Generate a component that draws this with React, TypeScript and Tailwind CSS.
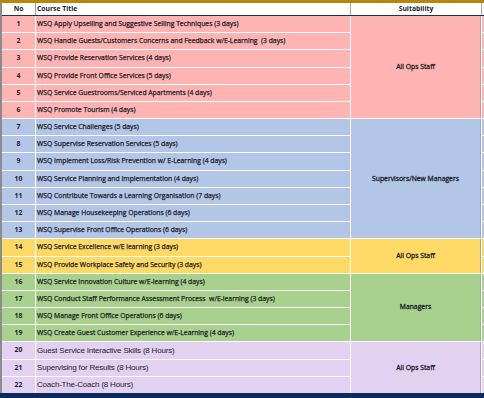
const groups = [
  {
    bg: "bg-[#ffb4b4]",
    label: "All Ops Staff",
    span: "row-span-6",
    rows: [
      "WSQ Apply Upselling and Suggestive Selling Techniques (3 days)",
      "WSQ Handle Guests/Customers Concerns and Feedback w/E-Learning  (3 days)",
      "WSQ Provide Reservation Services (4 days)",
      "WSQ Provide Front Office Services (5 days)",
      "WSQ Service Guestrooms/Serviced Apartments (4 days)",
      "WSQ Promote Tourism (4 days)",
    ],
  },
  {
    bg: "bg-[#b4c6e7]",
    label: "Supervisors/New Managers",
    span: "row-span-7",
    rows: [
      "WSQ Service Challenges (5 days)",
      "WSQ Supervise Reservation Services (5 days)",
      "WSQ Implement Loss/Risk Prevention w/ E-Learning (4 days)",
      "WSQ Service Planning and Implementation (4 days)",
      "WSQ Contribute Towards a Learning Organisation (7 days)",
      "WSQ Manage Housekeeping Operations (6 days)",
      "WSQ Supervise Front Office Operations (6 days)",
    ],
  },
  {
    bg: "bg-[#ffd966]",
    label: "All Ops Staff",
    span: "row-span-2",
    rows: [
      "WSQ Service Excellence w/E learning (3 days)",
      "WSQ Provide Workplace Safety and Security (3 days)",
    ],
  },
  {
    bg: "bg-[#a9d18e]",
    label: "Managers",
    span: "row-span-4",
    rows: [
      "WSQ Service Innovation Culture w/E-learning (4 days)",
      "WSQ Conduct Staff Performance Assessment Process  w/E-learning (3 days)",
      "WSQ Manage Front Office Operations (6 days)",
      "WSQ Create Guest Customer Experience w/E-Learning (4 days)",
    ],
  },
  {
    bg: "bg-[#e3d1f2]",
    label: "All Ops Staff",
    span: "row-span-3",
    light: true,
    rows: [
      "Guest Service Interactive Skills (8 Hours)",
      "Supervising for Results (8 Hours)",
      "Coach-The-Coach (8 Hours)",
    ],
  },
];

const cols = "grid-cols-[33px_314px_130px_2px]";

export default function App() {
  let n = 0;
  return (
    <div className="w-[484px] h-[398px] bg-white overflow-hidden flex flex-col font-['Open_Sans',Arial,sans-serif] text-[#1c1c2a] text-[6.8px]">
      <div className="h-[3px] bg-[#b8860b] shrink-0" />
      <div className="border-l-2 border-[#8c8c8c] flex-1 flex flex-col">
        <div className={`grid ${cols} gap-x-px h-[13px] bg-[#a6a6a6] border-b border-[#1f2d5c] shrink-0`}>
          <div className="bg-white flex items-center justify-center font-bold">No</div>
          <div className="bg-white flex items-center pl-[1px] font-bold">Course Title</div>
          <div className="bg-white flex items-center justify-center font-bold">Suitability</div>
          <div className="bg-white" />
        </div>
        <div className={`grid ${cols} grid-rows-[repeat(22,minmax(0,1fr))] gap-px bg-white h-[377px]`}>
          {groups.map((g) =>
            g.rows.map((title, i) => {
              n += 1;
              return [
                <div key={`n${n}`} className={`${g.bg} col-start-1 flex items-center justify-center font-bold`}>
                  {n}
                </div>,
                <div
                  key={`t${n}`}
                  className={`${g.bg} col-start-2 flex items-center pl-[1px] whitespace-pre ${g.light ? "text-[8px] font-['Liberation_Sans',Arial,sans-serif] tracking-[-0.2px]" : "[-webkit-text-stroke:0.25px_#1c1c2a]"}`}
                >
                  {title}
                </div>,
                i === 0 ? (
                  <div
                    key={`s${n}`}
                    className={`${g.bg} ${g.span} col-start-3 flex items-center justify-center border-r border-[#a6a6a6] [-webkit-text-stroke:0.3px_#1c1c2a]`}
                  >
                    {g.label}
                  </div>
                ) : null,
                <div key={`x${n}`} className={`${g.bg} col-start-4`} />,
              ];
            })
          )}
        </div>
      </div>
      <div className="h-[5px] bg-[#0c2a5e] shrink-0" />
    </div>
  );
}
